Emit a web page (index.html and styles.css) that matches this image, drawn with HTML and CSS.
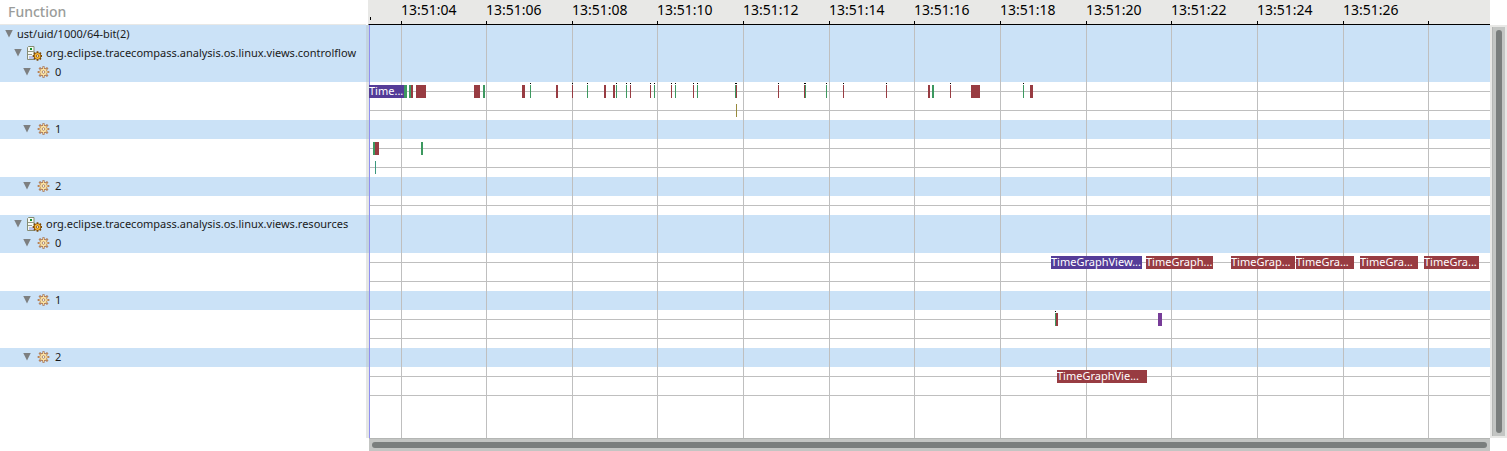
FILE: index.html
```html
<!DOCTYPE html>
<html lang="en">
<head>
  <meta charset="UTF-8">
  <meta name="viewport" content="width=device-width, initial-scale=1.0">
  <title>Flame Chart</title>
  <link rel="stylesheet" href="styles.css">
</head>
<body>
<svg class="defs" aria-hidden="true">
  <symbol id="gear" viewBox="0 0 16 16">
    <path d="M8.500 2.200v11.600M2.700 8h11.600M4.300 3.800l8.400 8.400M12.700 3.800l-8.400 8.400" stroke="#a8714f" stroke-width="2.200"/>
    <circle cx="8.500" cy="8" r="3.900" fill="#a8714f"/>
    <path d="M8.500 3.200v9.600M3.700 8h9.600M5.100 4.600l6.800 6.800M11.900 4.600l-6.800 6.800" stroke="#fbdf98" stroke-width="1"/>
    <circle cx="8.500" cy="8" r="3.200" fill="#fbe3a4"/>
    <circle cx="8.500" cy="8" r="1.300" fill="#fff" stroke="#9a7358" stroke-width=".8"/>
  </symbol>
  <symbol id="server" viewBox="0 0 16 16">
    <path d="M2.500 1.500h5.500v13h-6.500v-12z" fill="#f6f9f4" stroke="#858c74"/>
    <path d="M4 3h2v2H4z" fill="#12962f"/>
    <path d="M2 6.500h6M2 9.500h4" stroke="#949b88"/>
    <path d="M3 11h5v3H3z" fill="#bcc5ea"/>
    <path d="M11.500 6.200v9.600M6.700 11h9.600M8.100 7.600l6.800 6.800M14.900 7.600l-6.800 6.800" stroke="#7d4a08" stroke-width="1.800"/>
    <circle cx="11.500" cy="11" r="3.600" fill="#7d4a08"/>
    <circle cx="11.500" cy="11" r="2.900" fill="#f9b934"/>
    <circle cx="11.500" cy="11" r="1.200" fill="#fff" stroke="#7d4a08" stroke-width=".8"/>
  </symbol>
</svg>

<div class="view">
  <div class="tree-header">Function</div>
  <div class="time-scale" id="scale"></div>

  <div class="tree">
    <div class="row entry"><button class="expander" aria-label="Collapse"></button><span>ust/uid/1000/64-bit(2)</span></div>
    <div class="row entry level-1"><button class="expander" aria-label="Collapse"></button><svg class="icon"><use href="#server"/></svg><span>org.eclipse.tracecompass.analysis.os.linux.views.controlflow</span></div>
    <div class="row entry level-2"><button class="expander" aria-label="Collapse"></button><svg class="icon"><use href="#gear"/></svg><span>0</span></div>
    <div class="row"></div>
    <div class="row"></div>
    <div class="row entry level-2"><button class="expander" aria-label="Collapse"></button><svg class="icon"><use href="#gear"/></svg><span>1</span></div>
    <div class="row"></div>
    <div class="row"></div>
    <div class="row entry level-2"><button class="expander" aria-label="Collapse"></button><svg class="icon"><use href="#gear"/></svg><span>2</span></div>
    <div class="row"></div>
    <div class="row entry level-1"><button class="expander" aria-label="Collapse"></button><svg class="icon"><use href="#server"/></svg><span>org.eclipse.tracecompass.analysis.os.linux.views.resources</span></div>
    <div class="row entry level-2"><button class="expander" aria-label="Collapse"></button><svg class="icon"><use href="#gear"/></svg><span>0</span></div>
    <div class="row"></div>
    <div class="row"></div>
    <div class="row entry level-2"><button class="expander" aria-label="Collapse"></button><svg class="icon"><use href="#gear"/></svg><span>1</span></div>
    <div class="row"></div>
    <div class="row"></div>
    <div class="row entry level-2"><button class="expander" aria-label="Collapse"></button><svg class="icon"><use href="#gear"/></svg><span>2</span></div>
  </div>
  <div class="sash"></div>
  <div class="chart" id="chart"></div>
  <div class="scroll-v"><div class="trough"><div class="thumb"></div></div></div>
  <div class="scroll-h"><div class="thumb"></div></div>
</div>

<script src="chart.js"></script>
</body>
</html>
```

FILE: styles.css
```css
body { margin: 0; background: #fff; font-family: "Noto Sans", sans-serif; font-size: 11px; color: #1a1a1a; }
.defs { position: absolute; width: 0; height: 0; }

.view {
  display: grid;
  grid-template-columns: 366px 3px 1fr 17px;
  grid-template-rows: 25px 1fr 13px;
  height: 100vh;
}

/* header */
.tree-header {
  padding-left: 8px;
  border-bottom: 1px solid #e8e8e6;
  font-size: 14px;
  line-height: 24px;
  font-weight: 500;
  color: #9a9c9a;
}
.time-scale {
  grid-column: 2 / 4;
  position: relative;
  margin-left: 2px;
  border-left: 1px solid #e8e8e6;
  border-bottom: 1px solid #000;
  background: #e8e8e6;
  font-size: 14px;
  line-height: 20px;
  color: #000;
}
.tick { position: absolute; top: 0; bottom: 0; }
.tick::before {
  content: "";
  position: absolute;
  left: 0;
  bottom: 0;
  width: 1px;
  height: 3px;
  background: #000;
}
.tick.start { bottom: 4px; }

/* tree */
.tree { grid-column: 1 / 3; grid-row: 2; }
.row {
  display: flex;
  align-items: center;
  gap: 4px;
  box-sizing: border-box;
  height: 19px;
  padding: 0 0 2px 5px;
  white-space: nowrap;
}
.entry { background: #cbe2f7; }
.level-1 { padding-left: 14px; }
.level-2 { padding-left: 23px; }
.expander {
  flex: none;
  width: 8px;
  height: 8px;
  padding: 0;
  border: 0;
  background: #7d7f80;
  clip-path: polygon(0 0, 100% 0, 50% 100%);
}
.icon { flex: none; width: 16px; height: 16px; }
.sash { grid-column: 2; grid-row: 2; background: rgba(180, 185, 180, 0.35); }

/* chart */
.chart {
  grid-column: 3;
  grid-row: 2;
  position: relative;
  overflow: hidden;
}
.lane { position: relative; height: 19px; }
.lane.line { background: linear-gradient(#bfbfbf, #bfbfbf) 0 9px / 100% 1px no-repeat; }
.grid-line { position: absolute; top: 0; bottom: 0; width: 1px; background: #bfbfbf; }
.grid-line.begin { background: #9090f0; }
.state {
  position: absolute;
  z-index: 1;
  top: 3px;
  height: 13px;
  line-height: 11px;
  color: #fff;
  white-space: nowrap;
}
.state.dot::before {
  content: "";
  position: absolute;
  top: -2px;
  left: 0;
  width: 1px;
  height: 1px;
  background: #000;
}
.red { background: #983c42; }
.green { background: #3c985f; }
.indigo { background: #543c98; }
.violet { background: #773c98; }
.olive { background: #988a3c; }
.teal { background: #3c987e; }

/* scrollbars */
.scroll-v { grid-column: 4; grid-row: 2; display: flex; padding: 2px; background: #e8e8e6; }
.trough { flex: 1; display: flex; padding: 3px; border-left: 1px solid #b4b6b4; background: #c3c5c3; }
.scroll-h { grid-column: 3; grid-row: 3; display: flex; padding: 3px; border-top: 1px solid #b4b6b4; background: #c3c5c3; }
.thumb { flex: 1; border-radius: 3px; background: #7a7e7d; }
```

FILE: chart.js
```javascript
// positions are in units of the visible time range
const RANGE = 1121;
const ticks = [32, 117, 203, 288, 374, 460, 545, 631, 717, 802, 888, 974, 1059];

const events = {
  3: [
    [0, 35, 'indigo', 'Time...'], [35, 3, 'green'], [40, 2, 'green'], [42, 2, 'red'], [47, 10, 'red'],
    [105, 6, 'red'], [114, 2, 'green'], [153, 3, 'red'], [161, 1, 'green'], [187, 2, 'red'],
    [203, 1, 'red'], [218, 1, 'green'], [235, 2, 'red'], [244, 2, 'red'], [247, 1, 'green'],
    [257, 1, 'green'], [261, 1, 'red'], [281, 1, 'red'], [285, 1, 'green'], [302, 1, 'red'],
    [306, 1, 'green'], [324, 1, 'red'], [328, 1, 'green'], [366, 1, 'green'], [367, 1, 'red'],
    [409, 1, 'red'], [435, 1, 'red'], [436, 1, 'green'], [457, 1, 'green'], [474, 1, 'red'],
    [517, 1, 'red'], [559, 2, 'red'], [563, 2, 'green'], [581, 1, 'red'], [602, 9, 'red'],
    [654, 1, 'green'], [661, 3, 'red']
  ],
  4: [[367, 1, 'olive']],
  6: [[4, 2, 'green'], [6, 4, 'red'], [52, 2, 'green']],
  7: [[6, 1, 'teal']],
  12: [
    [682, 91, 'indigo', 'TimeGraphView...'], [777, 67, 'red', 'TimeGraph...'], [862, 64, 'red', 'TimeGrap...'],
    [927, 58, 'red', 'TimeGra...'], [991, 58, 'red', 'TimeGra...'], [1055, 55, 'red', 'TimeGra...']
  ],
  15: [[686, 1, 'green'], [687, 2, 'red'], [789, 4, 'violet']],
  18: [[688, 90, 'red', 'TimeGraphVie...']]
};
const entryRows = [0, 1, 2, 5, 8, 10, 11, 14, 17];
const ROWS = 20;

const pct = v => (v / RANGE * 100) + '%';

function add(parent, className, left, text) {
  const el = document.createElement('div');
  el.className = className;
  if (left !== undefined) el.style.left = pct(left);
  if (text) el.textContent = text;
  parent.appendChild(el);
  return el;
}

const scale = document.getElementById('scale');
const chart = document.getElementById('chart');

add(scale, 'tick start', 1);
ticks.forEach((t, i) => {
  const second = String(4 + i * 2).padStart(2, '0');
  add(scale, 'tick', t, i < ticks.length - 1 ? '13:51:' + second : '');
});

// row backgrounds, then the grid, then the states on top
for (let r = 0; r < ROWS; r++) {
  add(chart, entryRows.includes(r) ? 'lane entry' : 'lane line');
}
add(chart, 'grid-line begin', 0);
ticks.forEach(t => add(chart, 'grid-line', t));

const lanes = chart.querySelectorAll('.lane');
Object.keys(events).forEach(r => {
  const lane = lanes[r];
  events[r].forEach(([start, duration, colour, label]) => {
    const dot = duration === 1 && (r === '3' || r === '15') ? ' dot' : '';
    const el = add(lane, 'state ' + colour + dot, start, label);
    el.style.width = pct(duration);
  });
});
```
